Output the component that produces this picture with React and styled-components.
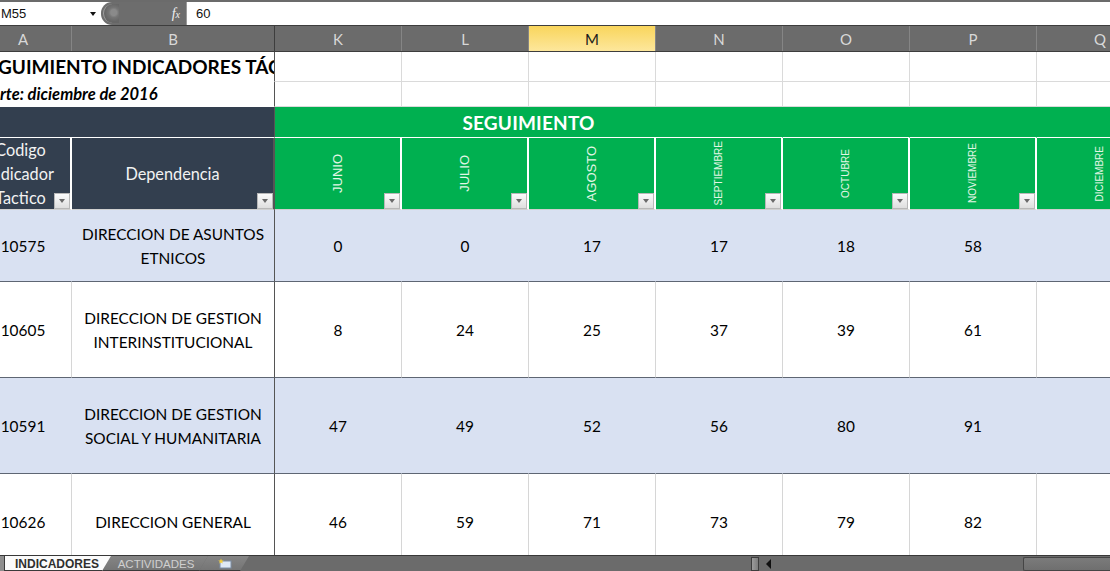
import React from "react";
import styled, { createGlobalStyle } from "styled-components";

const SHEET_FONT = `Lato, "Open Sans", "Liberation Sans", sans-serif`;
const UI_FONT = `"Liberation Sans", Arial, sans-serif`;
// A is partly scrolled out of view, the rest are K..Q after the frozen pane
const COLS = "97px 203px repeat(7, 127px)";

const GlobalStyle = createGlobalStyle`
  html, body { margin: 0; padding: 0; overflow: hidden; background: #fff; }
  body { font-family: ${SHEET_FONT}; }
`;

const Window = styled.div`
  width: 1110px;
  height: 571px;
  display: flex;
  flex-direction: column;
  overflow: hidden;
`;

/* ---------- formula bar ---------- */

const FormulaBar = styled.div`
  height: 25px;
  flex: none;
  display: flex;
  box-sizing: border-box;
  border-top: 2px solid #6b6b6b;
  background: #fff;
  font-family: ${UI_FONT};
  font-size: 13px;
  color: #111;
`;

const NameBox = styled.div`
  width: 101px;
  display: flex;
  align-items: center;
  justify-content: space-between;
  padding: 0 5px 0 1px;
  box-sizing: border-box;
`;

const DropArrow = styled.span`
  border-left: 3px solid transparent;
  border-right: 3px solid transparent;
  border-top: 4px solid #111;
`;

const FxPill = styled.div`
  width: 85px;
  display: flex;
  align-items: center;
  justify-content: space-between;
  padding: 0 6px 0 2px;
  box-sizing: border-box;
  background: #6d6d6d;
  border-radius: 11px 0 0 11px;
`;

const Knob = styled.span`
  width: 15px;
  height: 19px;
  border-radius: 10px 0 0 10px;
  background: radial-gradient(circle at 65% 45%, #8a8a8a 0 3px, #757575 5px, #666 9px);
  border-left: 1px solid #a0a0a0;
`;

const Fx = styled.span`
  font-family: "Liberation Serif", serif;
  font-style: italic;
  font-size: 14px;
  color: #f0f0f0;
  small { font-size: 10px; }
`;

const FormulaInput = styled.div`
  flex: 1;
  display: flex;
  align-items: center;
  padding-left: 9px;
  border-left: 1px solid #9a9a9a;
`;

/* ---------- sheet ---------- */

const Viewport = styled.div`
  flex: 1;
  min-height: 0;
  overflow: hidden;
`;

const Scrolled = styled.div`
  margin-left: -25px;
`;

const ColHeaders = styled.div`
  display: grid;
  grid-template-columns: ${COLS};
  height: 27px;
  box-sizing: border-box;
  background: #6b6b6b;
  border-top: 1px solid #3d3d3d;
  border-bottom: 1px solid #3d3d3d;
`;

const ColLetter = styled.div`
  display: flex;
  align-items: center;
  justify-content: center;
  border-right: 1px solid ${(p) => (p.$frozen ? "#3d3d3d" : "#858585")};
  font-size: 15px;
  color: ${(p) => (p.$active ? "#1a1a1a" : "#d8d8d8")};
  background: ${(p) => (p.$active ? "linear-gradient(#f9d55c, #fde79c)" : "transparent")};
`;

const Grid = styled.div`
  display: grid;
  grid-template-columns: ${COLS};
  grid-template-rows: 30px 25px 31px 72px 72px 96px 96px 96px;
  font-size: 15.4px;
  color: #000;
`;

const Cell = styled.div`
  box-sizing: border-box;
  position: relative;
  overflow: hidden;
  display: flex;
  align-items: center;
  justify-content: center;
  text-align: center;
  border-right: 1px solid ${(p) => (p.$frozen ? "#555" : "#dadada")};
  border-bottom: 1px solid #dadada;
`;

const TitleCell = styled(Cell)`
  grid-column: span 2;
  justify-content: flex-start;
  white-space: nowrap;
  padding-left: ${(p) => p.$indent || 2}px;
  font-weight: 700;
  font-style: ${(p) => (p.$italic ? "italic" : "normal")};
  font-size: ${(p) => p.$size}px;
  border-right-color: #555;
  border-bottom-color: #fff;
`;

const NavyBand = styled(Cell)`
  grid-column: span 2;
  background: #333f4f;
  border-right-color: #555;
  border-bottom-color: #fff;
`;

const GreenBand = styled(Cell)`
  grid-column: span ${(p) => p.$span || 1};
  background: #00b050;
  border-right-color: #00b050;
  border-bottom-color: #fff;
  color: #fff;
  font-weight: 700;
  font-size: 19px;
  letter-spacing: 0.2px;
`;

const HeadCell = styled(Cell)`
  flex-direction: column;
  background: ${(p) => (p.$green ? "#00b050" : "#333f4f")};
  color: #f2f2f2;
  font-size: 16.3px;
  line-height: 24px;
  border-right: 2px solid ${(p) => (p.$frozen ? "#555" : "#fff")};
  border-bottom-color: #d0d0d0;
`;

const HeadText = styled.div`
  padding-right: ${(p) => p.$pad || 0}px;
  white-space: nowrap;
`;

const MonthLabel = styled.span`
  writing-mode: vertical-rl;
  transform: rotate(180deg);
  font-family: ${UI_FONT};
  font-size: ${(p) => (p.$small ? 10 : 13)}px;
  line-height: 1;
  color: #e3f6e6;
  white-space: nowrap;
`;

const FilterButton = styled.span`
  position: absolute;
  right: 0;
  bottom: 0;
  width: 16px;
  height: 16px;
  box-sizing: border-box;
  display: flex;
  align-items: center;
  justify-content: center;
  background: linear-gradient(#fbfbfb, #dedede);
  border: 1px solid #b8b8b8;
  &::after {
    content: "";
    border-left: 3.5px solid transparent;
    border-right: 3.5px solid transparent;
    border-top: 4px solid #6a6a6a;
  }
`;

const DataCell = styled(Cell)`
  background: ${(p) => (p.$alt ? "#d9e1f2" : "#fff")};
  border-right-color: ${(p) => (p.$frozen ? "#555" : p.$alt ? "#d9e1f2" : "#d6d6d6")};
  border-bottom-color: #5e6673;
  line-height: 24px;
`;

/* ---------- sheet tabs + scrollbar ---------- */

const TabBar = styled.div`
  height: 16px;
  flex: none;
  display: flex;
  box-sizing: border-box;
  background: #6b6b6b;
  border-top: 1px solid #383838;
  font-family: ${UI_FONT};
`;

const TabStrip = styled.div`
  width: 750px;
  flex: none;
  display: flex;
`;

const Stub = styled.span`
  width: 4px;
  background: #8e8e8e;
  border-right: 1px solid #3a3a3a;
`;

const Tab = styled.div`
  display: flex;
  align-items: center;
  justify-content: center;
  width: ${(p) => p.$w}px;
  margin-right: -9px;
  padding: 0 6px 0 ${(p) => (p.$first ? 4 : 8)}px;
  box-sizing: border-box;
  font-size: ${(p) => (p.$active ? 12 : 11.5)}px;
  font-weight: ${(p) => (p.$active ? 700 : 400)};
  color: ${(p) => (p.$active ? "#2f2f2f" : "#cfcfcf")};
  background: ${(p) => (p.$active ? "#fbfbfb" : "linear-gradient(#858585, #747474)")};
  clip-path: ${(p) =>
    p.$first
      ? "polygon(0 0, 100% 0, calc(100% - 9px) 100%, 0 100%)"
      : "polygon(9px 0, 100% 0, calc(100% - 9px) 100%, 0 100%)"};
  position: relative;
  z-index: ${(p) => (p.$active ? 2 : 1)};
  box-shadow: inset 0 -1px 0 #3a3a3a;
`;

const ScrollArea = styled.div`
  flex: 1;
  display: flex;
  align-items: center;
`;

const Splitter = styled.span`
  width: 6px;
  height: 12px;
  margin-left: 1px;
  background: linear-gradient(90deg, #9c9c9c, #7c7c7c);
  border: 1px solid #3d3d3d;
`;

const LeftArrow = styled.span`
  margin-left: 7px;
  border-top: 5px solid transparent;
  border-bottom: 5px solid transparent;
  border-right: 5px solid #101010;
`;

const Thumb = styled.span`
  margin-left: auto;
  width: 87px;
  height: 14px;
  box-sizing: border-box;
  background: linear-gradient(#7b7b7b, #6f6f6f);
  border: 1px solid #454545;
  border-right: none;
  border-radius: 2px 0 0 2px;
`;

const InsertIcon = () => (
  <svg width="16" height="11" viewBox="0 0 16 11">
    <rect x="3" y="3" width="11" height="7" fill="#dfe9f5" stroke="#7d8ea5" strokeWidth="1" />
    <path d="M4 0.5 L4.8 2.4 L6.8 2.6 L5.2 3.8 L5.8 5.6 L4 4.6 L2.2 5.6 L2.8 3.8 L1.2 2.6 L3.2 2.4 Z" fill="#f6cf3a" />
  </svg>
);

/* ---------- data ---------- */

const LETTERS = ["A", "B", "K", "L", "M", "N", "O", "P", "Q"];

const MONTHS = [
  { name: "JUNIO" },
  { name: "JULIO" },
  { name: "AGOSTO" },
  { name: "SEPTIEMBRE", small: true },
  { name: "OCTUBRE", small: true },
  { name: "NOVIEMBRE", small: true },
  { name: "DICIEMBRE", small: true },
];

const ROWS = [
  { code: "10575", dep: ["DIRECCION DE ASUNTOS", "ETNICOS"], values: [0, 0, 17, 17, 18, 58] },
  { code: "10605", dep: ["DIRECCION DE GESTION", "INTERINSTITUCIONAL"], values: [8, 24, 25, 37, 39, 61] },
  { code: "10591", dep: ["DIRECCION DE GESTION", "SOCIAL Y HUMANITARIA"], values: [47, 49, 52, 56, 80, 91] },
  { code: "10626", dep: ["DIRECCION GENERAL"], values: [46, 59, 71, 73, 79, 82] },
];

const emptyRow = (key) =>
  Array.from({ length: 7 }, (_, i) => <Cell key={`${key}-${i}`} />);

export default function App() {
  return (
    <Window>
      <GlobalStyle />
      <FormulaBar>
        <NameBox>
          M55
          <DropArrow />
        </NameBox>
        <FxPill>
          <Knob />
          <Fx>
            f<small>x</small>
          </Fx>
        </FxPill>
        <FormulaInput>60</FormulaInput>
      </FormulaBar>

      <Viewport>
        <Scrolled>
          <ColHeaders>
            {LETTERS.map((l) => (
              <ColLetter key={l} $active={l === "M"} $frozen={l === "B"}>
                {l}
              </ColLetter>
            ))}
          </ColHeaders>

          <Grid>
            <TitleCell $size={19}>SEGUIMIENTO INDICADORES TÁCTICOS</TitleCell>
            {emptyRow("r1")}
            <TitleCell $size={16.5} $italic $indent={25}>
              rte: diciembre de 2016
            </TitleCell>
            {emptyRow("r2")}

            <NavyBand />
            <GreenBand $span={4}>SEGUIMIENTO</GreenBand>
            <GreenBand />
            <GreenBand />
            <GreenBand />

            <HeadCell>
              <HeadText $pad={4}>Codigo</HeadText>
              <HeadText $pad={4}>Indicador</HeadText>
              <HeadText $pad={4}>Tactico</HeadText>
              <FilterButton />
            </HeadCell>
            <HeadCell $frozen>
              <HeadText>Dependencia</HeadText>
              <FilterButton />
            </HeadCell>
            {MONTHS.map((m, i) => (
              <HeadCell key={m.name} $green>
                <MonthLabel $small={m.small}>{m.name}</MonthLabel>
                {i < 6 && <FilterButton />}
              </HeadCell>
            ))}

            {ROWS.map((r, ri) => {
              const alt = ri % 2 === 0;
              return (
                <React.Fragment key={r.code}>
                  <DataCell $alt={alt}>{r.code}</DataCell>
                  <DataCell $alt={alt} $frozen>
                    <div>
                      {r.dep.map((line) => (
                        <div key={line}>{line}</div>
                      ))}
                    </div>
                  </DataCell>
                  {r.values.map((v, vi) => (
                    <DataCell key={vi} $alt={alt}>
                      {v}
                    </DataCell>
                  ))}
                  <DataCell $alt={alt} />
                </React.Fragment>
              );
            })}
          </Grid>
        </Scrolled>
      </Viewport>

      <TabBar>
        <TabStrip>
          <Stub />
          <Tab $active $first $w={106}>
            INDICADORES
          </Tab>
          <Tab $w={106}>ACTIVIDADES</Tab>
          <Tab $w={50}>
            <InsertIcon />
          </Tab>
        </TabStrip>
        <ScrollArea>
          <Splitter />
          <LeftArrow />
          <Thumb />
        </ScrollArea>
      </TabBar>
    </Window>
  );
}
